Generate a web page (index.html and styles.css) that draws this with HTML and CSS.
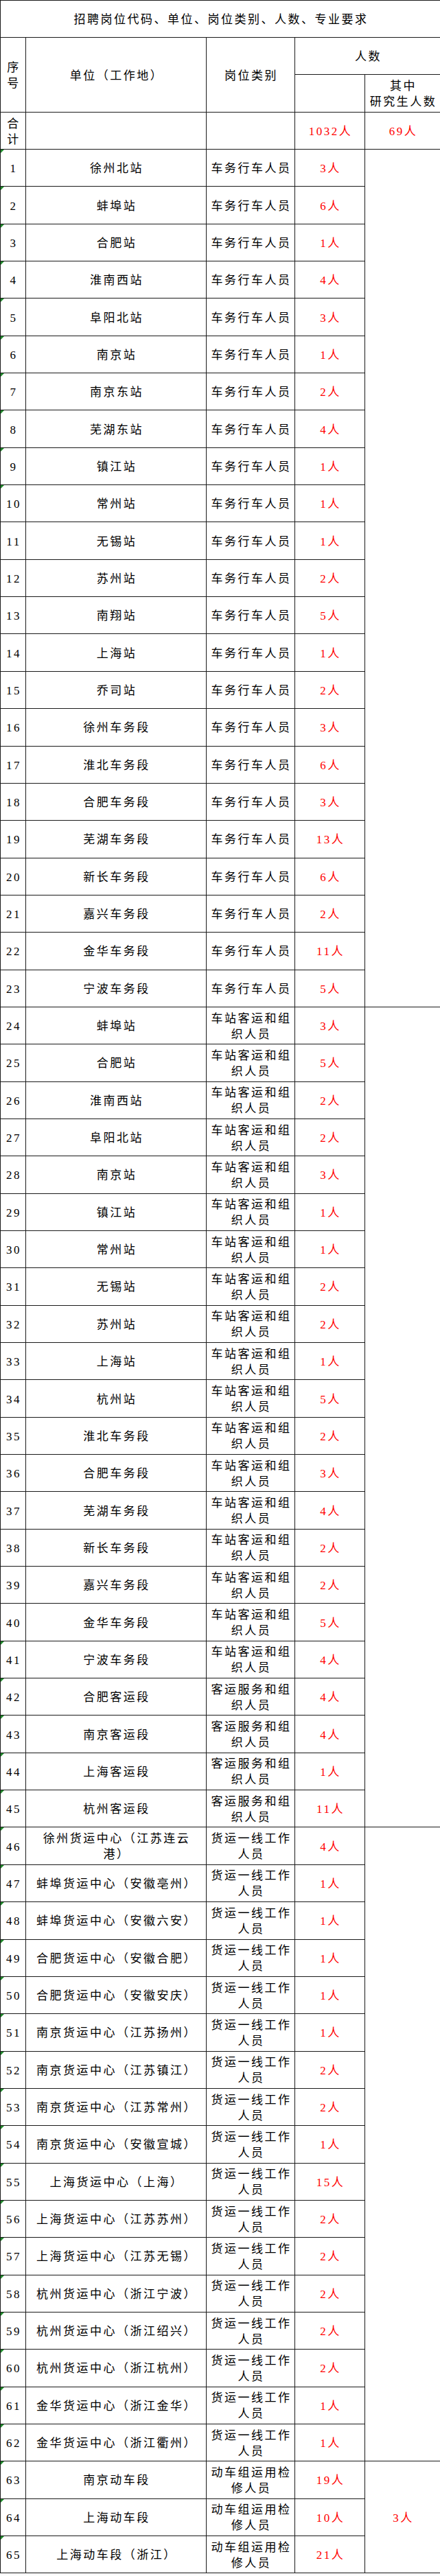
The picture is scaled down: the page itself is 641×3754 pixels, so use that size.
FILE: index.html
```html
<!DOCTYPE html>
<html lang="zh-CN">
<head>
<meta charset="utf-8">
<title>招聘岗位</title>
<link rel="stylesheet" href="styles.css">
</head>
<body>
<table class="sheet">
<colgroup><col class="c1"><col class="c2"><col class="c3"><col class="c4"><col class="c5"></colgroup>
<tbody>
<tr class="r-title"><td colspan="5">招聘岗位代码、单位、岗位类别、人数、专业要求</td></tr>
<tr class="r-h1"><td rowspan="2">序<br>号</td><td rowspan="2">单位（工作地）</td><td rowspan="2">岗位类别</td><td colspan="2">人数</td></tr>
<tr class="r-h2"><td></td><td>其中<br>研究生人数</td></tr>
<tr class="r-total"><td>合<br>计</td><td></td><td></td><td class="red">1032人</td><td class="red">69人</td></tr>
<tr class="r"><td class="n t">1</td><td>徐州北站</td><td>车务行车人员</td><td class="red">3人</td><td rowspan="23"></td></tr>
<tr class="r"><td class="n t">2</td><td>蚌埠站</td><td>车务行车人员</td><td class="red">6人</td></tr>
<tr class="r"><td class="n t">3</td><td>合肥站</td><td>车务行车人员</td><td class="red">1人</td></tr>
<tr class="r"><td class="n t">4</td><td>淮南西站</td><td>车务行车人员</td><td class="red">4人</td></tr>
<tr class="r"><td class="n t">5</td><td>阜阳北站</td><td>车务行车人员</td><td class="red">3人</td></tr>
<tr class="r"><td class="n t">6</td><td>南京站</td><td>车务行车人员</td><td class="red">1人</td></tr>
<tr class="r"><td class="n t">7</td><td>南京东站</td><td>车务行车人员</td><td class="red">2人</td></tr>
<tr class="r"><td class="n t">8</td><td>芜湖东站</td><td>车务行车人员</td><td class="red">4人</td></tr>
<tr class="r"><td class="n t">9</td><td>镇江站</td><td>车务行车人员</td><td class="red">1人</td></tr>
<tr class="r"><td class="n t">10</td><td>常州站</td><td>车务行车人员</td><td class="red">1人</td></tr>
<tr class="r"><td class="n">11</td><td>无锡站</td><td>车务行车人员</td><td class="red">1人</td></tr>
<tr class="r"><td class="n">12</td><td>苏州站</td><td>车务行车人员</td><td class="red">2人</td></tr>
<tr class="r"><td class="n">13</td><td>南翔站</td><td>车务行车人员</td><td class="red">5人</td></tr>
<tr class="r"><td class="n">14</td><td>上海站</td><td>车务行车人员</td><td class="red">1人</td></tr>
<tr class="r"><td class="n">15</td><td>乔司站</td><td>车务行车人员</td><td class="red">2人</td></tr>
<tr class="r"><td class="n">16</td><td>徐州车务段</td><td>车务行车人员</td><td class="red">3人</td></tr>
<tr class="r"><td class="n">17</td><td>淮北车务段</td><td>车务行车人员</td><td class="red">6人</td></tr>
<tr class="r"><td class="n">18</td><td>合肥车务段</td><td>车务行车人员</td><td class="red">3人</td></tr>
<tr class="r"><td class="n">19</td><td>芜湖车务段</td><td>车务行车人员</td><td class="red">13人</td></tr>
<tr class="r"><td class="n">20</td><td>新长车务段</td><td>车务行车人员</td><td class="red">6人</td></tr>
<tr class="r"><td class="n">21</td><td>嘉兴车务段</td><td>车务行车人员</td><td class="red">2人</td></tr>
<tr class="r"><td class="n">22</td><td>金华车务段</td><td>车务行车人员</td><td class="red">11人</td></tr>
<tr class="r"><td class="n">23</td><td>宁波车务段</td><td>车务行车人员</td><td class="red">5人</td></tr>
<tr class="r"><td class="n">24</td><td>蚌埠站</td><td>车站客运和组<br>织人员</td><td class="red">3人</td><td rowspan="22"></td></tr>
<tr class="r"><td class="n">25</td><td>合肥站</td><td>车站客运和组<br>织人员</td><td class="red">5人</td></tr>
<tr class="r"><td class="n">26</td><td>淮南西站</td><td>车站客运和组<br>织人员</td><td class="red">2人</td></tr>
<tr class="r"><td class="n">27</td><td>阜阳北站</td><td>车站客运和组<br>织人员</td><td class="red">2人</td></tr>
<tr class="r"><td class="n">28</td><td>南京站</td><td>车站客运和组<br>织人员</td><td class="red">3人</td></tr>
<tr class="r"><td class="n">29</td><td>镇江站</td><td>车站客运和组<br>织人员</td><td class="red">1人</td></tr>
<tr class="r"><td class="n">30</td><td>常州站</td><td>车站客运和组<br>织人员</td><td class="red">1人</td></tr>
<tr class="r"><td class="n">31</td><td>无锡站</td><td>车站客运和组<br>织人员</td><td class="red">2人</td></tr>
<tr class="r"><td class="n">32</td><td>苏州站</td><td>车站客运和组<br>织人员</td><td class="red">2人</td></tr>
<tr class="r"><td class="n">33</td><td>上海站</td><td>车站客运和组<br>织人员</td><td class="red">1人</td></tr>
<tr class="r"><td class="n">34</td><td>杭州站</td><td>车站客运和组<br>织人员</td><td class="red">5人</td></tr>
<tr class="r"><td class="n">35</td><td>淮北车务段</td><td>车站客运和组<br>织人员</td><td class="red">2人</td></tr>
<tr class="r"><td class="n">36</td><td>合肥车务段</td><td>车站客运和组<br>织人员</td><td class="red">3人</td></tr>
<tr class="r"><td class="n">37</td><td>芜湖车务段</td><td>车站客运和组<br>织人员</td><td class="red">4人</td></tr>
<tr class="r"><td class="n">38</td><td>新长车务段</td><td>车站客运和组<br>织人员</td><td class="red">2人</td></tr>
<tr class="r"><td class="n">39</td><td>嘉兴车务段</td><td>车站客运和组<br>织人员</td><td class="red">2人</td></tr>
<tr class="r"><td class="n">40</td><td>金华车务段</td><td>车站客运和组<br>织人员</td><td class="red">5人</td></tr>
<tr class="r"><td class="n t">41</td><td>宁波车务段</td><td>车站客运和组<br>织人员</td><td class="red">4人</td></tr>
<tr class="r"><td class="n t">42</td><td>合肥客运段</td><td>客运服务和组<br>织人员</td><td class="red">4人</td></tr>
<tr class="r"><td class="n t">43</td><td>南京客运段</td><td>客运服务和组<br>织人员</td><td class="red">4人</td></tr>
<tr class="r"><td class="n t">44</td><td>上海客运段</td><td>客运服务和组<br>织人员</td><td class="red">1人</td></tr>
<tr class="r"><td class="n t">45</td><td>杭州客运段</td><td>客运服务和组<br>织人员</td><td class="red">11人</td></tr>
<tr class="r"><td class="n t">46</td><td>徐州货运中心（江苏连云<br>港）</td><td>货运一线工作<br>人员</td><td class="red">4人</td><td rowspan="17"></td></tr>
<tr class="r"><td class="n t">47</td><td>蚌埠货运中心（安徽亳州）</td><td>货运一线工作<br>人员</td><td class="red">1人</td></tr>
<tr class="r"><td class="n t">48</td><td>蚌埠货运中心（安徽六安）</td><td>货运一线工作<br>人员</td><td class="red">1人</td></tr>
<tr class="r"><td class="n t">49</td><td>合肥货运中心（安徽合肥）</td><td>货运一线工作<br>人员</td><td class="red">1人</td></tr>
<tr class="r"><td class="n t">50</td><td>合肥货运中心（安徽安庆）</td><td>货运一线工作<br>人员</td><td class="red">1人</td></tr>
<tr class="r"><td class="n t">51</td><td>南京货运中心（江苏扬州）</td><td>货运一线工作<br>人员</td><td class="red">1人</td></tr>
<tr class="r"><td class="n t">52</td><td>南京货运中心（江苏镇江）</td><td>货运一线工作<br>人员</td><td class="red">2人</td></tr>
<tr class="r"><td class="n t">53</td><td>南京货运中心（江苏常州）</td><td>货运一线工作<br>人员</td><td class="red">2人</td></tr>
<tr class="r"><td class="n t">54</td><td>南京货运中心（安徽宣城）</td><td>货运一线工作<br>人员</td><td class="red">1人</td></tr>
<tr class="r"><td class="n t">55</td><td>上海货运中心（上海）</td><td>货运一线工作<br>人员</td><td class="red">15人</td></tr>
<tr class="r"><td class="n t">56</td><td>上海货运中心（江苏苏州）</td><td>货运一线工作<br>人员</td><td class="red">2人</td></tr>
<tr class="r"><td class="n t">57</td><td>上海货运中心（江苏无锡）</td><td>货运一线工作<br>人员</td><td class="red">2人</td></tr>
<tr class="r"><td class="n t">58</td><td>杭州货运中心（浙江宁波）</td><td>货运一线工作<br>人员</td><td class="red">2人</td></tr>
<tr class="r"><td class="n t">59</td><td>杭州货运中心（浙江绍兴）</td><td>货运一线工作<br>人员</td><td class="red">2人</td></tr>
<tr class="r"><td class="n t">60</td><td>杭州货运中心（浙江杭州）</td><td>货运一线工作<br>人员</td><td class="red">2人</td></tr>
<tr class="r"><td class="n t">61</td><td>金华货运中心（浙江金华）</td><td>货运一线工作<br>人员</td><td class="red">1人</td></tr>
<tr class="r"><td class="n t">62</td><td>金华货运中心（浙江衢州）</td><td>货运一线工作<br>人员</td><td class="red">1人</td></tr>
<tr class="r"><td class="n t">63</td><td>南京动车段</td><td>动车组运用检<br>修人员</td><td class="red">19人</td><td rowspan="3" class="red">3人</td></tr>
<tr class="r"><td class="n t">64</td><td>上海动车段</td><td>动车组运用检<br>修人员</td><td class="red">10人</td></tr>
<tr class="r"><td class="n t">65</td><td>上海动车段（浙江）</td><td>动车组运用检<br>修人员</td><td class="red">21人</td></tr>
</tbody>
</table>
</body>
</html>
```

FILE: styles.css
```css
html, body {
  margin: 0;
  padding: 0;
  background: #ffffff;
}

.sheet {
  width: 641px;
  border-collapse: collapse;
  table-layout: fixed;
  font-family: "Liberation Serif", "Noto Sans CJK SC", serif;
  font-size: 17px;
  line-height: 23px;
  letter-spacing: 2.5px;
  color: #000000;
}

.sheet col.c1 { width: 37px; }
.sheet col.c2 { width: 263px; }
.sheet col.c3 { width: 129px; }
.sheet col.c4 { width: 102px; }
.sheet col.c5 { width: 110px; }

.sheet td {
  border: 1px solid #1a1a1a;
  padding: 2px 0 0 2px;
  text-align: center;
  vertical-align: middle;
  overflow: hidden;
}

.r-title { height: 54px; }
.r-h1 { height: 54px; }
.r-h2 { height: 55px; }
.r-total { height: 54px; }
.r { height: 54.35px; }

.red {
  color: #ff0000;
}

.n {
  position: relative;
}

.n.t::before {
  content: "";
  position: absolute;
  left: 0;
  top: 0;
  width: 0;
  height: 0;
  border-top: 5px solid #1f8a2a;
  border-right: 5px solid transparent;
}
```
